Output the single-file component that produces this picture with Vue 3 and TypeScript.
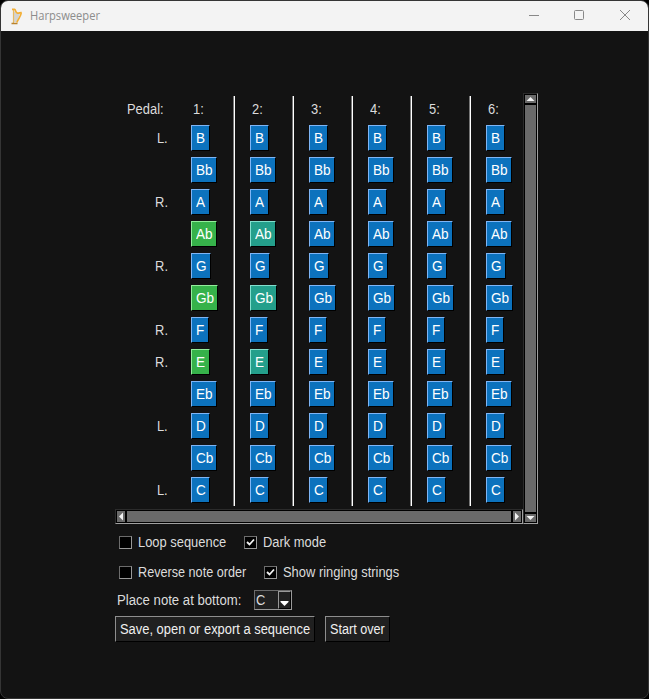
<script setup lang="ts">
import { ref } from 'vue'

type NoteState = 'off' | 'played' | 'ringing'

interface Note {
  name: string
  pedal: string
  width: number
}

const notes: Note[] = [
  { name: 'B', pedal: 'L.', width: 19 },
  { name: 'Bb', pedal: '', width: 26 },
  { name: 'A', pedal: 'R.', width: 19 },
  { name: 'Ab', pedal: '', width: 26 },
  { name: 'G', pedal: 'R.', width: 20 },
  { name: 'Gb', pedal: '', width: 27 },
  { name: 'F', pedal: 'R.', width: 18 },
  { name: 'E', pedal: 'R.', width: 19 },
  { name: 'Eb', pedal: '', width: 26 },
  { name: 'D', pedal: 'L.', width: 19 },
  { name: 'Cb', pedal: '', width: 26 },
  { name: 'C', pedal: 'L.', width: 19 },
]

const steps = [1, 2, 3, 4, 5, 6]
const chord = ['Ab', 'Gb', 'E']

function stateOf(step: number, note: string): NoteState {
  if (!chord.includes(note)) return 'off'
  if (step === 1) return 'played'
  return step === 2 ? 'ringing' : 'off'
}

const loop = ref(false)
const dark = ref(true)
const reverse = ref(false)
const ringing = ref(true)
</script>

<template>
  <div class="window">
    <header class="titlebar">
      <svg class="harp" width="12" height="17" viewBox="0 0 12 17">
        <path d="M3 3 L6 5.500 L9 6 L5.500 14 L3 14 Z" fill="#d3d3d0" />
        <path d="M2.500 2 V15" stroke="#e6b962" stroke-width="1.200" />
        <path d="M1 1.300 H3.500 C5 2 4.500 5 6.500 5.200 S9 4.300 10.500 4.600" fill="none" stroke="#f2ae35" stroke-width="1.700" />
        <path d="M10.300 4.500 C10.300 8 7 11 5.800 14.500" fill="none" stroke="#f2ae35" stroke-width="1.600" />
        <path d="M.5 15.500 H6.500" stroke="#b9822d" stroke-width="1.400" />
      </svg>
      <span class="title">Harpsweeper</span>
      <div class="controls">
        <svg width="10" height="10" viewBox="0 0 10 10"><path d="M0 5.500H10" /></svg>
        <svg width="10" height="10" viewBox="0 0 10 10"><rect x=".5" y=".5" width="9" height="9" rx="1" /></svg>
        <svg class="close" width="10" height="10" viewBox="0 0 10 10"><path d="M0 0L10 10M10 0L0 10" /></svg>
      </div>
    </header>

    <main class="content">
      <section class="sequencer">
        <div class="main-pane">
          <div class="board">
            <div class="labels">
              <div class="head pedal-head"><span class="text">Pedal:</span></div>
              <div v-for="n in notes" :key="n.name" class="row pedal"><span class="text end">{{ n.pedal }}</span></div>
            </div>
            <div v-for="s in steps" :key="s" class="step">
              <div class="head"><span class="text">{{ s }}:</span></div>
              <div v-for="n in notes" :key="n.name" class="row">
                <button class="note" :class="stateOf(s, n.name)" :style="{ width: n.width + 'px' }"><span class="text note-name">{{ n.name }}</span></button>
              </div>
            </div>
          </div>
          <div class="scroll horizontal">
            <div class="arrow"><svg width="8" height="9" viewBox="0 0 8 9"><path d="M6 .5V8.500L2 4.500Z" /></svg></div>
            <div class="thumb"></div>
            <div class="arrow"><svg width="8" height="9" viewBox="0 0 8 9"><path d="M2 .5V8.500L6 4.500Z" /></svg></div>
          </div>
        </div>
        <div class="scroll vertical">
          <div class="arrow"><svg width="11" height="8" viewBox="0 0 11 8"><path d="M1.500 6H9.500L5.500 2Z" /></svg></div>
          <div class="thumb"></div>
          <div class="arrow"><svg width="11" height="8" viewBox="0 0 11 8"><path d="M1.500 2H9.500L5.500 6Z" /></svg></div>
        </div>
      </section>

      <div class="options">
        <label class="check loop" @click="loop = !loop">
          <span class="box"><svg v-if="loop" width="9" height="9" viewBox="0 0 9 9"><path d="M1 4L3.500 6.500L8 1.500" /></svg></span>
          <span class="text">Loop sequence</span>
        </label>
        <label class="check" @click="dark = !dark">
          <span class="box"><svg v-if="dark" width="9" height="9" viewBox="0 0 9 9"><path d="M1 4L3.500 6.500L8 1.500" /></svg></span>
          <span class="text">Dark mode</span>
        </label>
      </div>
      <div class="options">
        <label class="check reverse" @click="reverse = !reverse">
          <span class="box"><svg v-if="reverse" width="9" height="9" viewBox="0 0 9 9"><path d="M1 4L3.500 6.500L8 1.500" /></svg></span>
          <span class="text narrow">Reverse note order</span>
        </label>
        <label class="check" @click="ringing = !ringing">
          <span class="box"><svg v-if="ringing" width="9" height="9" viewBox="0 0 9 9"><path d="M1 4L3.500 6.500L8 1.500" /></svg></span>
          <span class="text">Show ringing strings</span>
        </label>
      </div>
      <div class="place">
        <div class="place-label"><span class="text wide">Place note at bottom:</span></div>
        <div class="combo">
          <span class="value"><span class="text">C</span></span>
          <span class="drop"><svg width="9" height="5" viewBox="0 0 9 5"><path d="M.5 0H8.500V1L4.500 5L.5 1Z" /></svg></span>
        </div>
      </div>
      <div class="actions">
        <button class="action save"><span class="text">Save, open or export a sequence</span></button>
        <button class="action start"><span class="text narrow">Start over</span></button>
      </div>
    </main>
  </div>
</template>

<style>
body {
  background: #000;
}
</style>

<style scoped>
* {
  box-sizing: border-box;
}
.window {
  width: 649px;
  height: 699px;
  border: 1px solid #353535;
  border-radius: 8px;
  overflow: hidden;
  background: #131313;
  color: #dcdcdc;
  font: 14px/16px 'Liberation Sans', Arial, sans-serif;
}
.text {
  display: inline-block;
  transform: scaleX(0.922);
  transform-origin: left;
  white-space: nowrap;
}
.text.end {
  transform-origin: right;
}
.text.narrow {
  transform: scaleX(0.903);
}
.text.wide {
  transform: scaleX(0.94);
}
.text.note-name {
  transform: scaleX(0.97);
}
.titlebar {
  display: flex;
  align-items: center;
  height: 30px;
  padding: 0 18px 0 10px;
  background: #f3f3f3;
}
.title {
  margin-left: 7px;
  font: 12px/16px 'Open Sans', 'Noto Sans', sans-serif;
  color: #8c8c8c;
  transform: scaleX(0.93);
  transform-origin: left;
}
.controls {
  display: flex;
  gap: 35px;
  margin: 0 0 2px auto;
}
.controls svg {
  display: block;
  fill: none;
  stroke: #888;
  stroke-width: 1;
}
.controls .close {
  margin-left: 1px;
}
.content {
  padding: 62px 0 0 114px;
}
.sequencer {
  display: flex;
  width: 423px;
  height: 431px;
}
.main-pane {
  width: 408px;
}
.board {
  display: flex;
  height: 416px;
  padding: 3px 0;
}
.labels {
  width: 61px;
}
.head {
  height: 26px;
  line-height: 27px;
  padding-left: 2px;
}
.pedal-head {
  padding-left: 12px;
}
.row {
  height: 32px;
  padding: 3px 0;
}
.pedal {
  padding-right: 8px;
  line-height: 27px;
  text-align: right;
}
.step {
  width: 59px;
  padding-left: 15px;
  border-right: 1px solid #fff;
  box-shadow: inset -1px 0 #767676;
}
.step:last-child {
  width: 52px;
  border: 0;
  box-shadow: none;
}
.note {
  display: block;
  height: 26px;
  padding: 0 0 0 4px;
  border: 1px solid;
  border-color: #7fb5f5 #000 #000 #7fb5f5;
  background: #0c72bd;
  color: #fff;
  font: inherit;
  line-height: 25px;
  text-align: left;
  white-space: nowrap;
}
.note.played {
  background: #36b24a;
  border-color: #93ee9c #000 #000 #93ee9c;
}
.note.ringing {
  background: #249f8b;
  border-color: #83dfce #000 #000 #83dfce;
}
.scroll {
  display: flex;
  gap: 2px;
  padding: 1px;
  border: 1px solid;
  border-color: #2b2b2b #a0a0a0 #a0a0a0 #2b2b2b;
  background: #000;
}
.horizontal {
  height: 15px;
}
.vertical {
  flex-direction: column;
  width: 15px;
}
.arrow {
  display: flex;
  flex: none;
  align-items: center;
  background: #6a6a6a;
}
.horizontal .arrow {
  width: 8px;
}
.vertical .arrow {
  height: 8px;
}
.arrow svg {
  display: block;
  fill: #f2f2f2;
}
.thumb {
  flex: 1;
  background: #6a6a6a;
}
.options {
  display: flex;
  height: 30px;
  padding: 3px 0 0 4px;
}
.check {
  display: flex;
  align-items: center;
  gap: 6px;
  height: 30px;
  line-height: 17px;
  white-space: nowrap;
}
.check.loop {
  width: 125px;
}
.check.reverse {
  width: 145px;
}
.box {
  display: flex;
  flex: none;
  align-items: center;
  justify-content: center;
  width: 13px;
  height: 13px;
  border: 1px solid;
  border-color: #6c6c6c #999 #999 #6c6c6c;
  background: #000;
}
.box svg {
  fill: none;
  stroke: #f2f2f2;
  stroke-width: 1.8;
}
.place {
  display: flex;
  align-items: center;
  height: 20px;
  margin-top: 6px;
  padding-left: 2px;
}
.place-label {
  width: 137px;
  line-height: 18px;
}
.combo {
  display: flex;
  width: 38px;
  height: 20px;
  border: 1px solid;
  border-color: #6c6c6c #999 #999 #6c6c6c;
  background: #202020;
}
.value {
  flex: 1;
  padding-left: 1px;
  line-height: 19px;
}
.drop {
  display: flex;
  justify-content: center;
  align-items: flex-end;
  width: 13px;
  padding-bottom: 2px;
  border: 1px solid;
  border-color: #999 #000 #000 #999;
}
.drop svg {
  flex: none;
  fill: #fff;
}
.actions {
  display: flex;
  gap: 10px;
  margin-top: 6px;
}
.action {
  height: 26px;
  padding: 0 0 0 4px;
  border: 1px solid;
  border-color: #8e8e8e #000 #000 #8e8e8e;
  background: #202020;
  color: #f0f0f0;
  font: inherit;
  line-height: 25px;
  text-align: left;
  white-space: nowrap;
}
.save {
  width: 200px;
}
.start {
  width: 65px;
}
</style>
